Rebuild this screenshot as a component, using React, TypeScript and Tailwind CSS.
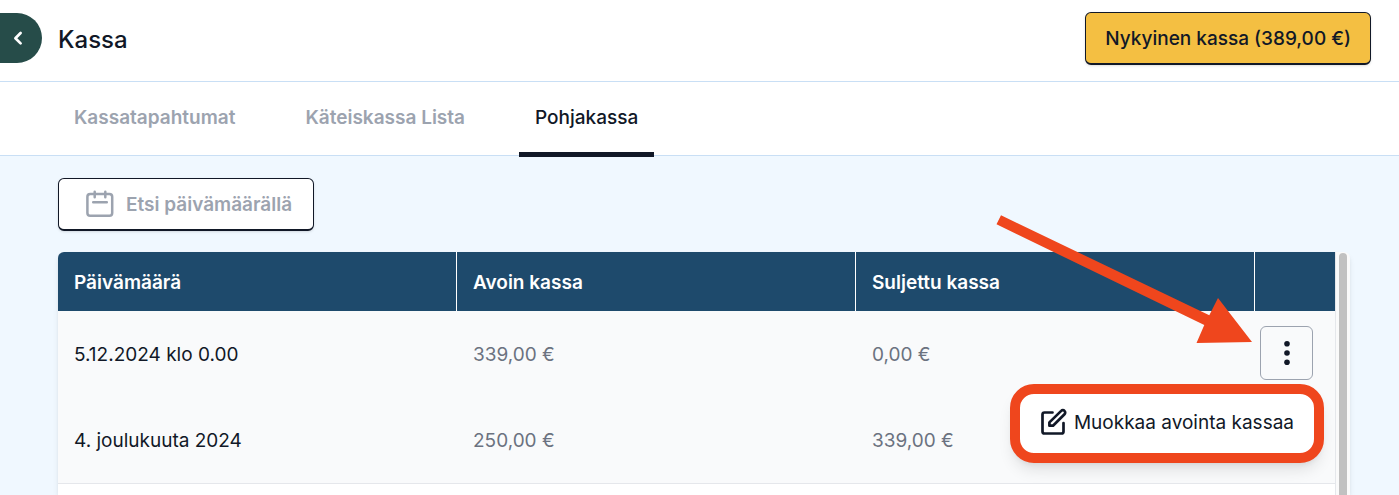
import React from "react";

const tabs = [
  { label: "Kassatapahtumat", active: false },
  { label: "Käteiskassa Lista", active: false },
  { label: "Pohjakassa", active: true },
];

const rows = [
  { date: "5.12.2024 klo 0.00", open: "339,00 €", closed: "0,00 €", menu: true },
  { date: "4. joulukuuta 2024", open: "250,00 €", closed: "339,00 €", menu: false },
];

function Header() {
  return (
    <header className="flex h-[82px] shrink-0 items-start border-b border-[#c9dff5] bg-white pr-7 pt-3">
      <button
        type="button"
        aria-label="Takaisin"
        className="mt-px flex h-[50px] w-[42px] items-center rounded-r-full bg-[#264c49] pl-3 text-white"
      >
        <svg width="12" height="16" viewBox="0 0 12 16" fill="none" stroke="currentColor" strokeWidth="2.7" strokeLinecap="round" strokeLinejoin="round">
          <path d="M8.600 3 3.400 8.200l5.200 5.200" />
        </svg>
      </button>
      <h1 className="ml-4 flex h-14 items-center text-2xl font-medium">Kassa</h1>
      <button
        type="button"
        className="ml-auto h-[53px] rounded-md border border-b-2 border-[#111827] bg-[#f4bf42] px-[19px] pt-0.5 text-[19px] font-medium shadow-sm"
      >
        Nykyinen kassa (389,00 €)
      </button>
    </header>
  );
}

function Tabs() {
  return (
    <nav className="flex h-[74px] shrink-0 gap-[38px] border-b border-[#c9dff5] bg-white pl-[58px]">
      {tabs.map((tab) => (
        <a
          key={tab.label}
          href="#"
          aria-current={tab.active ? "page" : undefined}
          className={
            tab.active
              ? "z-10 h-[75px] border-b-5 border-[#111827] px-4 pt-[22px] text-[19px] leading-7 font-medium text-[#111827]"
              : "h-[75px] px-4 pt-[22px] text-[19px] leading-7 font-semibold text-[#9ca3af]"
          }
        >
          {tab.label}
        </a>
      ))}
    </nav>
  );
}

function CalendarIcon() {
  return (
    <svg width="28" height="28" viewBox="0 0 28 28" fill="none" stroke="currentColor" strokeWidth="2.500" strokeLinecap="round" strokeLinejoin="round">
      <rect x="1.400" y="4" width="24.800" height="21.800" rx="2.800" />
      <path d="M8.700 1.700v5.600M19.300 1.700v5.600M7.200 12.200h13.600" />
    </svg>
  );
}

function EditIcon() {
  return (
    <svg className="mb-1" width="28" height="28" viewBox="0 0 28 28" fill="none" stroke="currentColor" strokeWidth="2.700" strokeLinecap="round" strokeLinejoin="round">
      <path d="M12.500 4.500H4.500a2 2 0 0 0-2 2V23.500a2 2 0 0 0 2 2H21.500a2 2 0 0 0 2-2V15" />
      <path d="M21.200 2.900a2.300 2.300 0 0 1 3.300 0 2.300 2.300 0 0 1 0 3.300L13 17.700H9.400V14.400Z" />
    </svg>
  );
}

function RowMenu() {
  return (
    <div className="relative ml-[5px] w-[53px]">
      <button
        type="button"
        aria-label="Toiminnot"
        className="flex h-[54px] w-full items-center justify-center rounded-md border border-[#9ca3af] bg-[#f9fafb]"
      >
        <svg width="8" height="26" viewBox="0 0 8 26" fill="currentColor">
          <circle cx="4" cy="3.700" r="2.800" />
          <circle cx="4" cy="13" r="2.800" />
          <circle cx="4" cy="22.300" r="2.800" />
        </svg>
      </button>
      <svg className="pointer-events-none absolute right-full bottom-[37px] z-20 mr-2" width="256" height="128" viewBox="0 0 256 128" fill="#ef461d">
        <path d="M5 0.300 213.300 100.300 222 83 256 127 200.500 128 208.300 110 0.500 9.300Z" />
      </svg>
      <div className="absolute top-[58px] -right-[11px] z-10 rounded-3xl border-10 border-[#ef461d] bg-white shadow-lg">
        <button type="button" className="flex h-[59px] items-center gap-1.5 px-5 text-[19px] whitespace-nowrap">
          <EditIcon />
          Muokkaa avointa kassaa
        </button>
      </div>
    </div>
  );
}

function CashTable() {
  return (
    <div className="mt-[21px] flex min-h-0 flex-1 rounded-t-md bg-[#fafafa] shadow-md">
      <div className="min-w-0 flex-1 rounded-tl-md bg-white">
        <table className="w-full table-fixed border-separate border-spacing-0 text-left text-[19px]">
          <colgroup>
            <col />
            <col />
            <col />
            <col className="w-20" />
          </colgroup>
          <thead>
            <tr className="h-[59px] text-white">
              <th className="rounded-tl-md border-r border-white bg-[#1e4a6c] px-4 pt-1 pb-0 font-semibold">Päivämäärä</th>
              <th className="border-r border-white bg-[#1e4a6c] px-4 pt-1 pb-0 font-semibold">Avoin kassa</th>
              <th className="border-r border-white bg-[#1e4a6c] px-4 pt-1 pb-0 font-semibold">Suljettu kassa</th>
              <th aria-label="Toiminnot" className="bg-[#1e4a6c]" />
            </tr>
          </thead>
          <tbody>
            {rows.map((row) => (
              <tr key={row.date} className="group h-[86px] bg-[#f9fafb] last:h-[87px]">
                <td className="border-[#e5e7eb] px-4 pt-0.5 pb-0 group-last:border-b">{row.date}</td>
                <td className="border-[#e5e7eb] px-4 pt-0.5 pb-0 text-[#6b7280] group-last:border-b">{row.open}</td>
                <td className="border-[#e5e7eb] px-4 pt-0.5 pb-0 text-[#6b7280] group-last:border-b">{row.closed}</td>
                <td className="border-[#e5e7eb] p-0 pb-0.5 group-last:border-b">{row.menu && <RowMenu />}</td>
              </tr>
            ))}
          </tbody>
        </table>
      </div>
      <div className="w-[15px] shrink-0 border-l border-[#e5e7eb] px-[3px] pt-px">
        <div className="h-full w-2 rounded-t-full bg-[#c1c1c1]" />
      </div>
    </div>
  );
}

export default function App() {
  return (
    <div className="flex h-screen flex-col overflow-hidden bg-[#f0f8ff] font-['Inter',sans-serif] text-[#111827]">
      <Header />
      <Tabs />
      <main className="flex min-h-0 flex-1 flex-col pt-[22px] pr-[49px] pl-[58px]">
        <button
          type="button"
          className="flex h-[53px] shrink-0 items-center gap-3 self-start rounded-md border border-b-2 border-[#111827] bg-white pr-[21px] pl-[27px] text-[19px] font-semibold text-[#9ca3af] shadow-sm"
        >
          <CalendarIcon />
          <span className="pt-0.5">Etsi päivämäärällä</span>
        </button>
        <CashTable />
      </main>
    </div>
  );
}
